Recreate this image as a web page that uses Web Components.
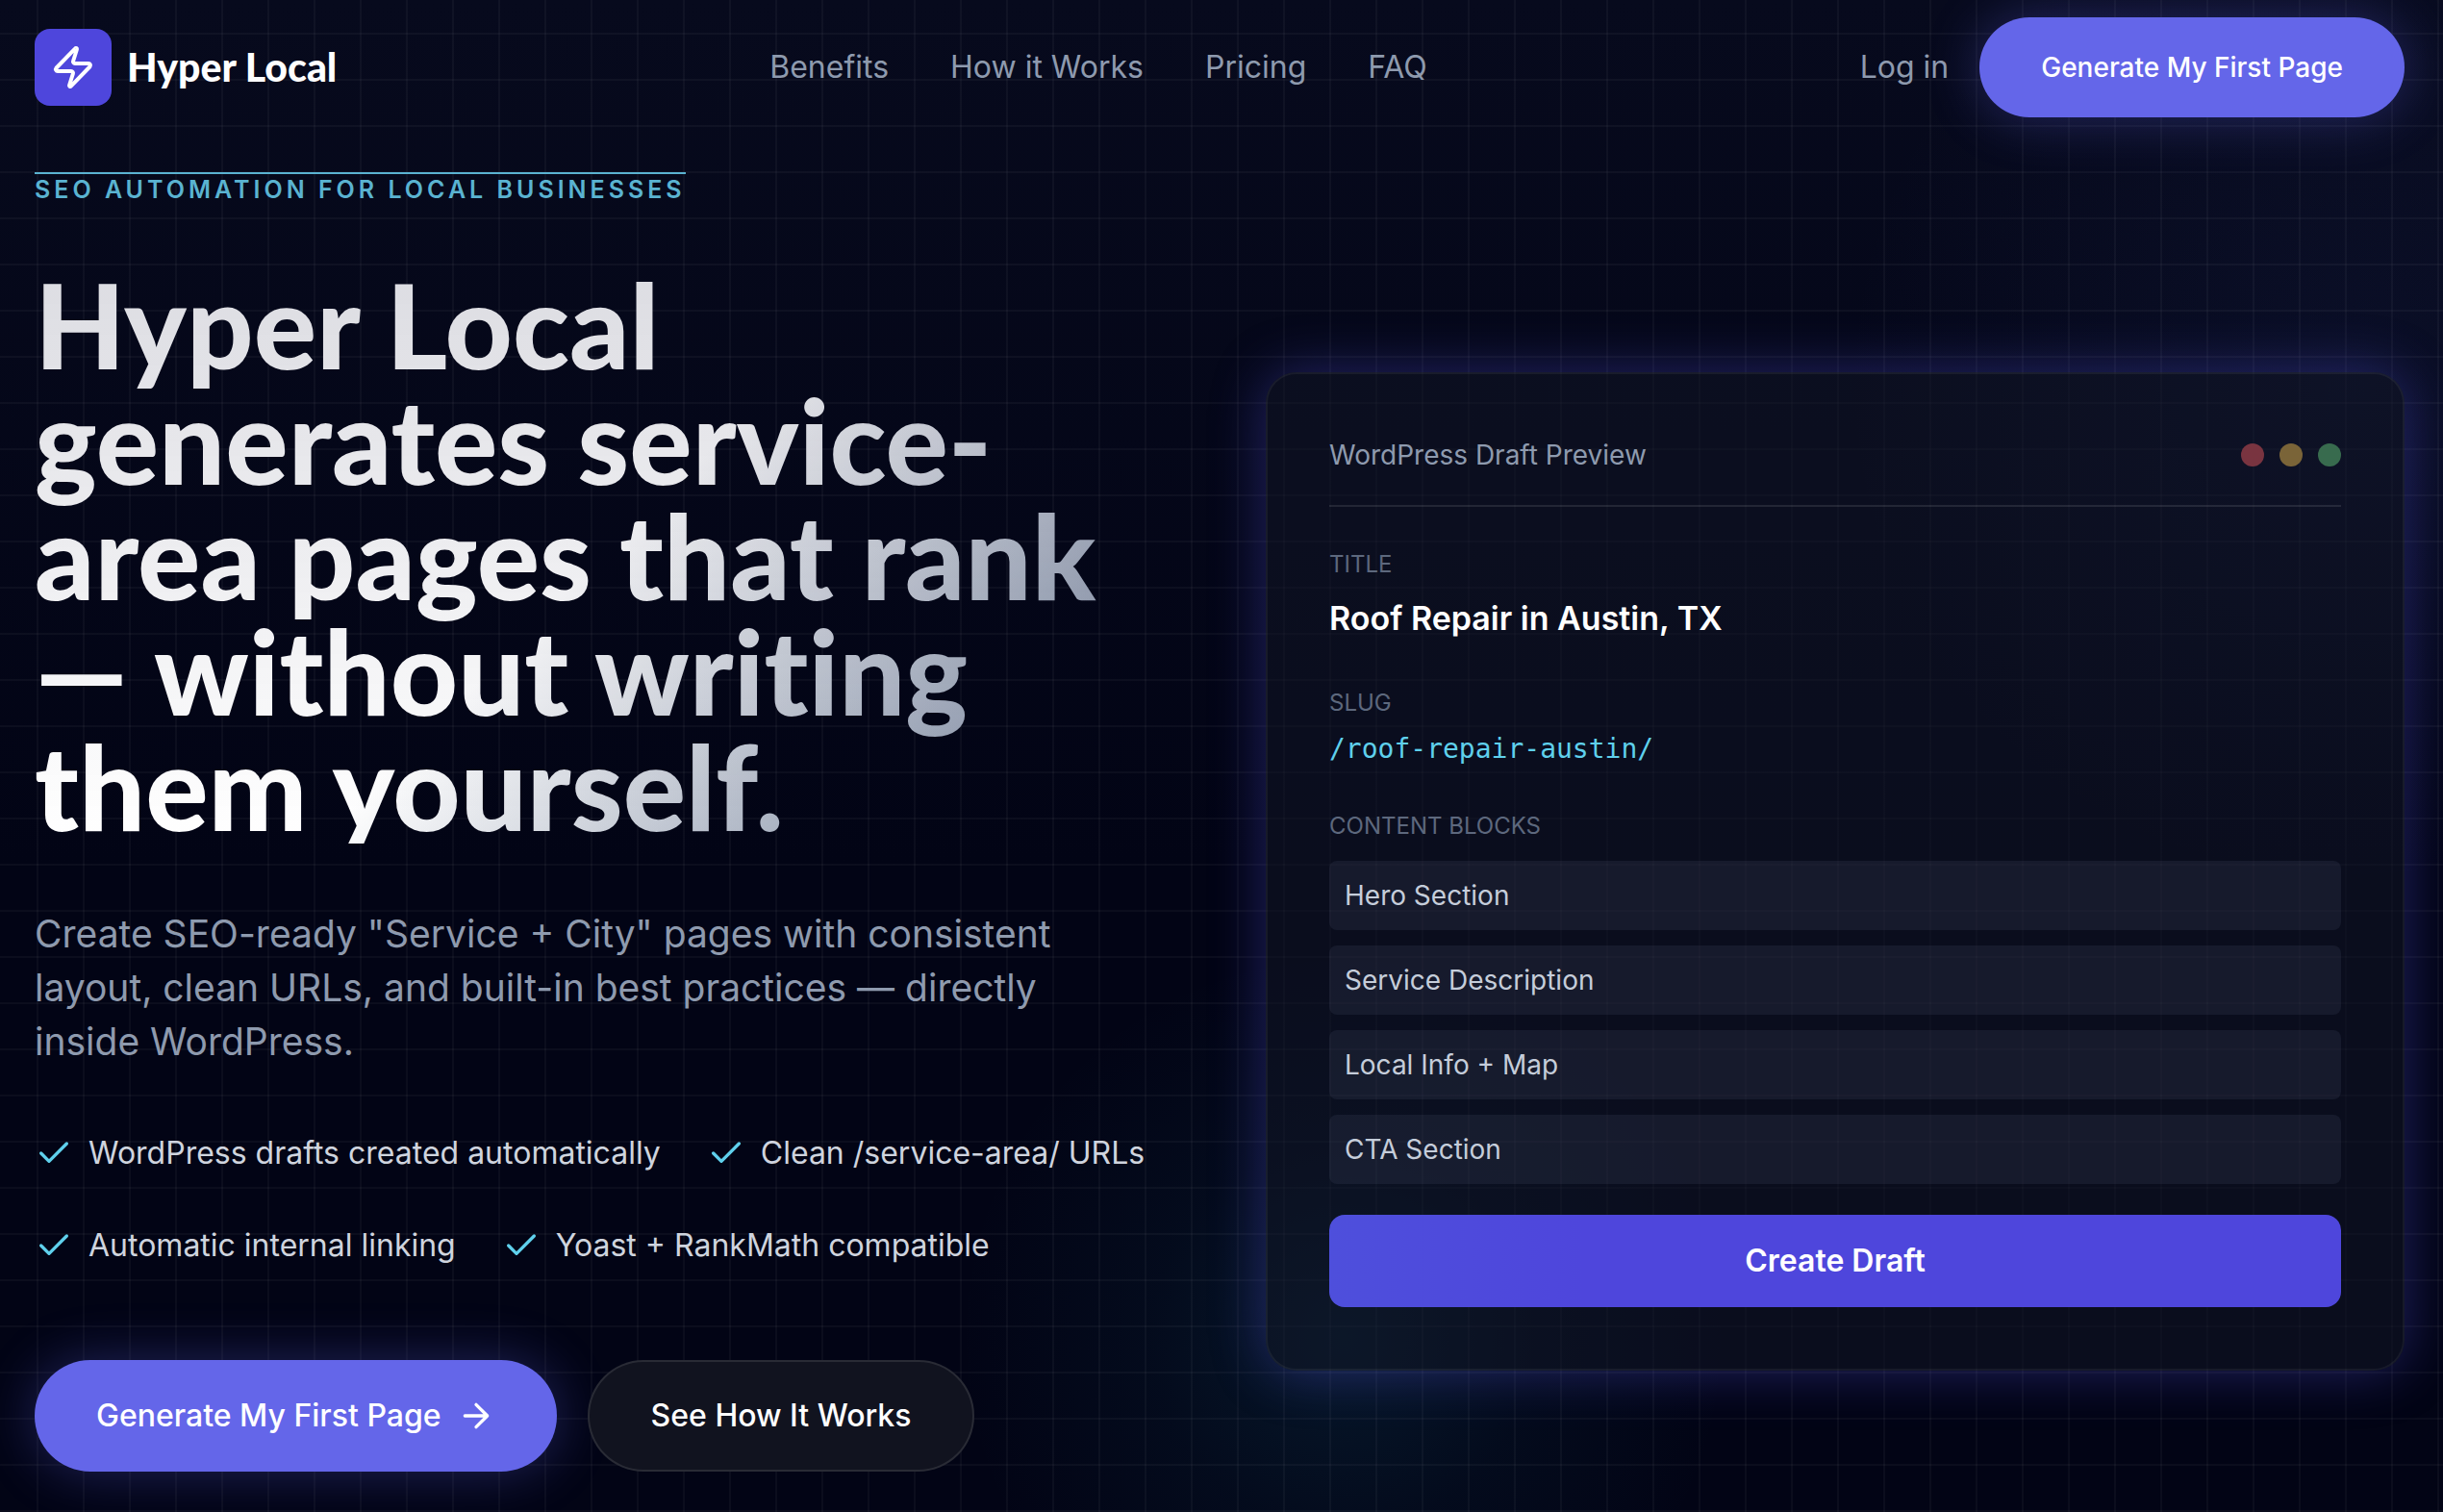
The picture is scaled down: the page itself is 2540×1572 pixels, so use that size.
<!DOCTYPE html>
<html lang="en">
<head>
<meta charset="utf-8">
<meta name="viewport" content="width=device-width, initial-scale=1">
<title>Hyper Local</title>
<style>
    html {
        background: #020413;
    }

    body {
        margin: 0;
        min-height: 100vh;
        overflow-x: hidden;
        font-family: Inter, "Open Sans", sans-serif;
        color: #fff;
        --display: Lato, "Open Sans", sans-serif;
        --mono: "DejaVu Sans Mono", monospace;
        --indigo: #6466e9;
        --indigo-deep: #4e46dc;
        --cyan: #5fd0ec;
        --muted: #8e9aae;
        --line: rgba(255, 255, 255, .1);
    }
</style>
</head>
<body>

<hl-page>
    <hl-header slot="header">
        <hl-logo slot="logo">Hyper Local</hl-logo>
        <hl-link href="#benefits">Benefits</hl-link>
        <hl-link href="#how">How it Works</hl-link>
        <hl-link href="#pricing">Pricing</hl-link>
        <hl-link href="#faq">FAQ</hl-link>
        <hl-link slot="actions" href="#login">Log in</hl-link>
        <hl-button slot="actions" size="small">Generate My First Page</hl-button>
    </hl-header>

    <hl-hero>
        <span slot="eyebrow">SEO AUTOMATION FOR LOCAL BUSINESSES</span>
        <span slot="title">Hyper Local<br>generates service-<br>area pages that rank<br>— without writing<br>them yourself.</span>
        <span slot="lead">Create SEO-ready "Service + City" pages with consistent<br>layout, clean URLs, and built-in best practices — directly<br>inside WordPress.</span>
        <hl-check slot="checks">WordPress drafts created automatically</hl-check>
        <hl-check slot="checks">Clean /service-area/ URLs</hl-check>
        <hl-check slot="checks">Automatic internal linking</hl-check>
        <hl-check slot="checks">Yoast + RankMath compatible</hl-check>
        <hl-button slot="cta" arrow>Generate My First Page</hl-button>
        <hl-button slot="cta" variant="ghost">See How It Works</hl-button>

        <hl-preview slot="preview">
            <span slot="heading">WordPress Draft Preview</span>
            <hl-field label="TITLE">Roof Repair in Austin, TX</hl-field>
            <hl-field label="SLUG" mono>/roof-repair-austin/</hl-field>
            <hl-field label="CONTENT BLOCKS" blocks>
                <hl-block>Hero Section</hl-block>
                <hl-block>Service Description</hl-block>
                <hl-block>Local Info + Map</hl-block>
                <hl-block>CTA Section</hl-block>
            </hl-field>
        </hl-preview>
    </hl-hero>
</hl-page>

<script>
    class HlElement extends HTMLElement {
        connectedCallback() {
            if (this.shadowRoot) return
            this.attachShadow({ mode: "open" }).innerHTML = this.render()
        }
    }

    // Dark backdrop: grid lines over two soft glows
    customElements.define("hl-page", class extends HlElement {
        render() {
            return `
            <style>
                :host {
                    display: block;
                    min-height: 100vh;
                    background:
                        linear-gradient(to right, rgba(255, 255, 255, .035) 2px, transparent 2px) 38px 34px / 48px 48px,
                        linear-gradient(to bottom, rgba(255, 255, 255, .035) 2px, transparent 2px) 38px 34px / 48px 48px,
                        radial-gradient(circle 400px at 55% 1390px, rgba(34, 140, 170, .15), rgba(34, 140, 170, .05) 50%, transparent),
                        radial-gradient(circle 520px at 96% 400px, rgba(60, 80, 160, .1), transparent),
                        linear-gradient(#070a1d, #020415 900px);
                }
            </style>
            <slot name="header"></slot>
            <main><slot></slot></main>`
        }
    })

    customElements.define("hl-header", class extends HlElement {
        render() {
            return `
            <style>
                :host { display: block; }
                header {
                    display: flex;
                    align-items: center;
                    justify-content: space-between;
                    padding: 18px 40px 18px 36px;
                }
                nav { display: flex; gap: 64px; }
                .actions { display: flex; align-items: center; gap: 32px; }
            </style>
            <header>
                <slot name="logo"></slot>
                <nav><slot></slot></nav>
                <div class="actions"><slot name="actions"></slot></div>
            </header>`
        }
    })

    customElements.define("hl-logo", class extends HlElement {
        render() {
            return `
            <style>
                :host { display: block; }
                a {
                    display: flex;
                    align-items: center;
                    gap: 16px;
                    color: #fff;
                    text-decoration: none;
                    font: 900 41px/48px var(--display);
                }
                .mark {
                    display: grid;
                    place-items: center;
                    width: 80px;
                    height: 80px;
                    border-radius: 16px;
                    background: var(--indigo-deep);
                }
            </style>
            <a href="#">
                <span class="mark">
                    <svg width="48" height="48" viewBox="0 0 24 24" fill="none" stroke="#fff" stroke-width="2" stroke-linecap="round" stroke-linejoin="round">
                        <path d="M4 14a1 1 0 0 1-.78-1.63l9.9-10.2a.5.5 0 0 1 .86.46l-1.92 6.02A1 1 0 0 0 13 10h7a1 1 0 0 1 .78 1.63l-9.9 10.2a.5.5 0 0 1-.86-.46l1.92-6.02A1 1 0 0 0 11 14z"/>
                    </svg>
                </span>
                <slot></slot>
            </a>`
        }
    })

    customElements.define("hl-link", class extends HlElement {
        render() {
            return `
            <style>
                :host { display: block; }
                a {
                    color: var(--muted);
                    text-decoration: none;
                    font-size: 32px;
                    line-height: 48px;
                    white-space: nowrap;
                }
            </style>
            <a href="${this.getAttribute("href")}"><slot></slot></a>`
        }
    })

    customElements.define("hl-button", class extends HlElement {
        render() {
            const arrow = this.hasAttribute("arrow") ? `
                <svg width="40" height="40" viewBox="0 0 24 24" fill="none" stroke="currentColor" stroke-width="2" stroke-linecap="round" stroke-linejoin="round">
                    <path d="M5 12h14M12 5l7 7-7 7"/>
                </svg>` : ""
            return `
            <style>
                :host { display: block; }
                button {
                    display: flex;
                    align-items: center;
                    gap: 16px;
                    height: 116px;
                    padding: 0 64px;
                    border: 0;
                    border-radius: 58px;
                    color: #fff;
                    background: var(--indigo);
                    box-shadow: 0 0 56px rgba(99, 102, 241, .32);
                    font: 500 32px/48px Inter, sans-serif;
                    white-space: nowrap;
                }
                :host([size="small"]) button {
                    height: 104px;
                    font-size: 28px;
                    line-height: 40px;
                }
                :host([variant="ghost"]) button {
                    border: 2px solid var(--line);
                    background: #11131f;
                    box-shadow: none;
                }
            </style>
            <button type="button"><slot></slot>${arrow}</button>`
        }
    })

    customElements.define("hl-hero", class extends HlElement {
        render() {
            return `
            <style>
                :host { display: block; }
                section {
                    display: grid;
                    grid-template-columns: minmax(0, 1fr) minmax(0, 1fr);
                    gap: 96px;
                    align-items: start;
                    padding: 39px 40px 40px 36px;
                }
                .copy {
                    display: flex;
                    flex-direction: column;
                    align-items: flex-start;
                }
                .eyebrow {
                    margin: 0 0 64px;
                    border-top: 2px solid #5ab3d1;
                    color: #5ab3d1;
                    font-size: 25px;
                    line-height: 32px;
                    font-weight: 600;
                    letter-spacing: 4px;
                    white-space: nowrap;
                }
                h1 {
                    align-self: stretch;
                    margin: 0 0 66px;
                    font: 900 122px/120px var(--display);
                    font-variant-ligatures: none;
                    white-space: nowrap;
                    color: transparent;
                    background:
                        linear-gradient(rgba(20, 22, 60, .15), rgba(20, 22, 60, 0)),
                        linear-gradient(135deg, #fff 50%, #9aa4b6 82%);
                    -webkit-background-clip: text;
                    background-clip: text;
                }
                .lead {
                    margin: 0 0 64px;
                    color: var(--muted);
                    font-size: 39px;
                    line-height: 56px;
                }
                .checks {
                    display: flex;
                    flex-wrap: wrap;
                    gap: 48px;
                    margin-bottom: 95px;
                }
                .cta { display: flex; gap: 32px; }
                .preview { margin-top: 208px; }
            </style>
            <section>
                <div class="copy">
                    <p class="eyebrow"><slot name="eyebrow"></slot></p>
                    <h1><slot name="title"></slot></h1>
                    <p class="lead"><slot name="lead"></slot></p>
                    <div class="checks"><slot name="checks"></slot></div>
                    <div class="cta"><slot name="cta"></slot></div>
                </div>
                <div class="preview"><slot name="preview"></slot></div>
            </section>`
        }
    })

    customElements.define("hl-check", class extends HlElement {
        render() {
            return `
            <style>
                :host {
                    display: flex;
                    align-items: center;
                    gap: 16px;
                    color: #cfd4de;
                    font-size: 32px;
                    line-height: 48px;
                    white-space: nowrap;
                }
                svg { stroke: var(--cyan); }
            </style>
            <svg width="40" height="40" viewBox="0 0 24 24" fill="none" stroke-width="2" stroke-linecap="round" stroke-linejoin="round">
                <path d="M20 6L9 17l-5-5"/>
            </svg>
            <span><slot></slot></span>`
        }
    })

    customElements.define("hl-preview", class extends HlElement {
        render() {
            return `
            <style>
                :host { display: block; }
                article {
                    padding: 64px;
                    border: 2px solid rgba(255, 255, 255, .06);
                    border-radius: 32px;
                    background: rgba(17, 21, 38, .5);
                    box-shadow: 0 0 56px rgba(89, 86, 235, .36);
                }
                header {
                    display: flex;
                    align-items: center;
                    justify-content: space-between;
                    padding-bottom: 32px;
                    border-bottom: 2px solid var(--line);
                    color: var(--muted);
                    font-size: 28px;
                    line-height: 40px;
                }
                .dots { display: flex; gap: 16px; }
                .dots i {
                    width: 24px;
                    height: 24px;
                    border-radius: 50%;
                }
                .dots i:nth-child(1) { background: #793440; }
                .dots i:nth-child(2) { background: #7a6438; }
                .dots i:nth-child(3) { background: #386b4e; }
                .fields {
                    display: grid;
                    gap: 44px;
                    padding: 44px 0 32px;
                }
                button {
                    display: block;
                    width: 100%;
                    height: 96px;
                    border: 0;
                    border-radius: 16px;
                    color: #fff;
                    background: linear-gradient(to right, #4e4fdc, var(--indigo-deep) 25%);
                    font: 600 32px/48px Inter, sans-serif;
                }
            </style>
            <article>
                <header>
                    <slot name="heading"></slot>
                    <div class="dots"><i></i><i></i><i></i></div>
                </header>
                <div class="fields"><slot></slot></div>
                <button type="button">Create Draft</button>
            </article>`
        }
    })

    customElements.define("hl-field", class extends HlElement {
        render() {
            return `
            <style>
                :host { display: block; }
                .label {
                    margin-bottom: 12px;
                    color: #5d687d;
                    font-size: 24px;
                    line-height: 32px;
                }
                .value {
                    font-size: 34px;
                    line-height: 56px;
                    font-weight: 600;
                }
                :host([mono]) .value {
                    color: var(--cyan);
                    font: 28px/40px var(--mono);
                }
                :host([blocks]) .label { margin-bottom: 20px; }
                :host([blocks]) .value {
                    display: grid;
                    gap: 16px;
                    font-weight: 400;
                }
            </style>
            <div class="label">${this.getAttribute("label")}</div>
            <div class="value"><slot></slot></div>`
        }
    })

    customElements.define("hl-block", class extends HlElement {
        render() {
            return `
            <style>
                :host {
                    display: block;
                    padding: 16px;
                    border-radius: 8px;
                    color: #c5cdda;
                    background: rgba(190, 205, 255, .065);
                    font-size: 28px;
                    line-height: 40px;
                }
            </style>
            <slot></slot>`
        }
    })
</script>
</body>
</html>
